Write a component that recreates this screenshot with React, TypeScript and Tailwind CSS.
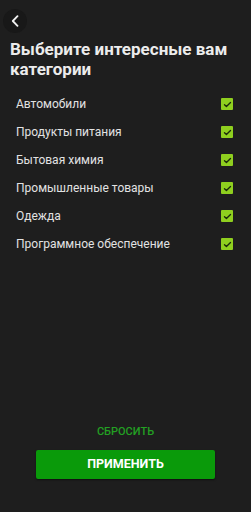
const categories = [
  "Автомобили",
  "Продукты питания",
  "Бытовая химия",
  "Промышленные товары",
  "Одежда",
  "Программное обеспечение",
]

function CheckBox() {
  return (
    <div className="flex h-[12px] w-[12px] items-center justify-center rounded-[1px] bg-[#8fcf1f]">
      <svg width="9" height="9" viewBox="0 0 12 12" fill="none">
        <path d="M2 6.3l2.6 2.5L10 3.4" stroke="#1b2a0a" strokeWidth="1.8" strokeLinecap="round" strokeLinejoin="round" />
      </svg>
    </div>
  )
}

export default function App() {
  return (
    <div
      className="flex h-[512px] w-[251px] flex-col bg-[#1e1e1e]"
      style={{ fontFamily: "Roboto, 'Noto Sans', sans-serif" }}
    >
      {/* Back */}
      <div className="pl-[3px] pt-[9px]">
        <button className="flex h-[24px] w-[24px] items-center justify-center rounded-full bg-[#181818]">
          <svg width="10" height="12" viewBox="0 0 10 12" fill="none">
            <path d="M7.5 1.2L2.8 6l4.7 4.8" stroke="#f2f2f2" strokeWidth="1.8" strokeLinecap="round" strokeLinejoin="round" />
          </svg>
        </button>
      </div>

      {/* Title */}
      <h1 className="mt-[6px] px-[10px] text-[17px] font-bold leading-[20px] text-[#ececec]">
        Выберите интересные вам категории
      </h1>

      {/* List */}
      <div className="mt-[11px] flex flex-col pl-[16px] pr-[18px]">
        {categories.map((c) => (
          <div key={c} className="flex h-[28px] items-center justify-between">
            <span className="text-[12px] leading-[28px] text-[#e2e2e2]">{c}</span>
            <CheckBox />
          </div>
        ))}
      </div>

      <div className="flex-1" />

      {/* Actions */}
      <div className="flex flex-col items-center pb-[33px]">
        <button className="text-[11px] font-medium leading-[16px] text-[#23a023]">СБРОСИТЬ</button>
        <button className="mt-[10px] flex h-[29px] w-[179px] items-center justify-center rounded-[2px] bg-[#0a9a0a] text-[12.5px] font-bold text-white shadow-[0_1px_2px_rgba(0,0,0,0.5)]">
          ПРИМЕНИТЬ
        </button>
      </div>
    </div>
  )
}
